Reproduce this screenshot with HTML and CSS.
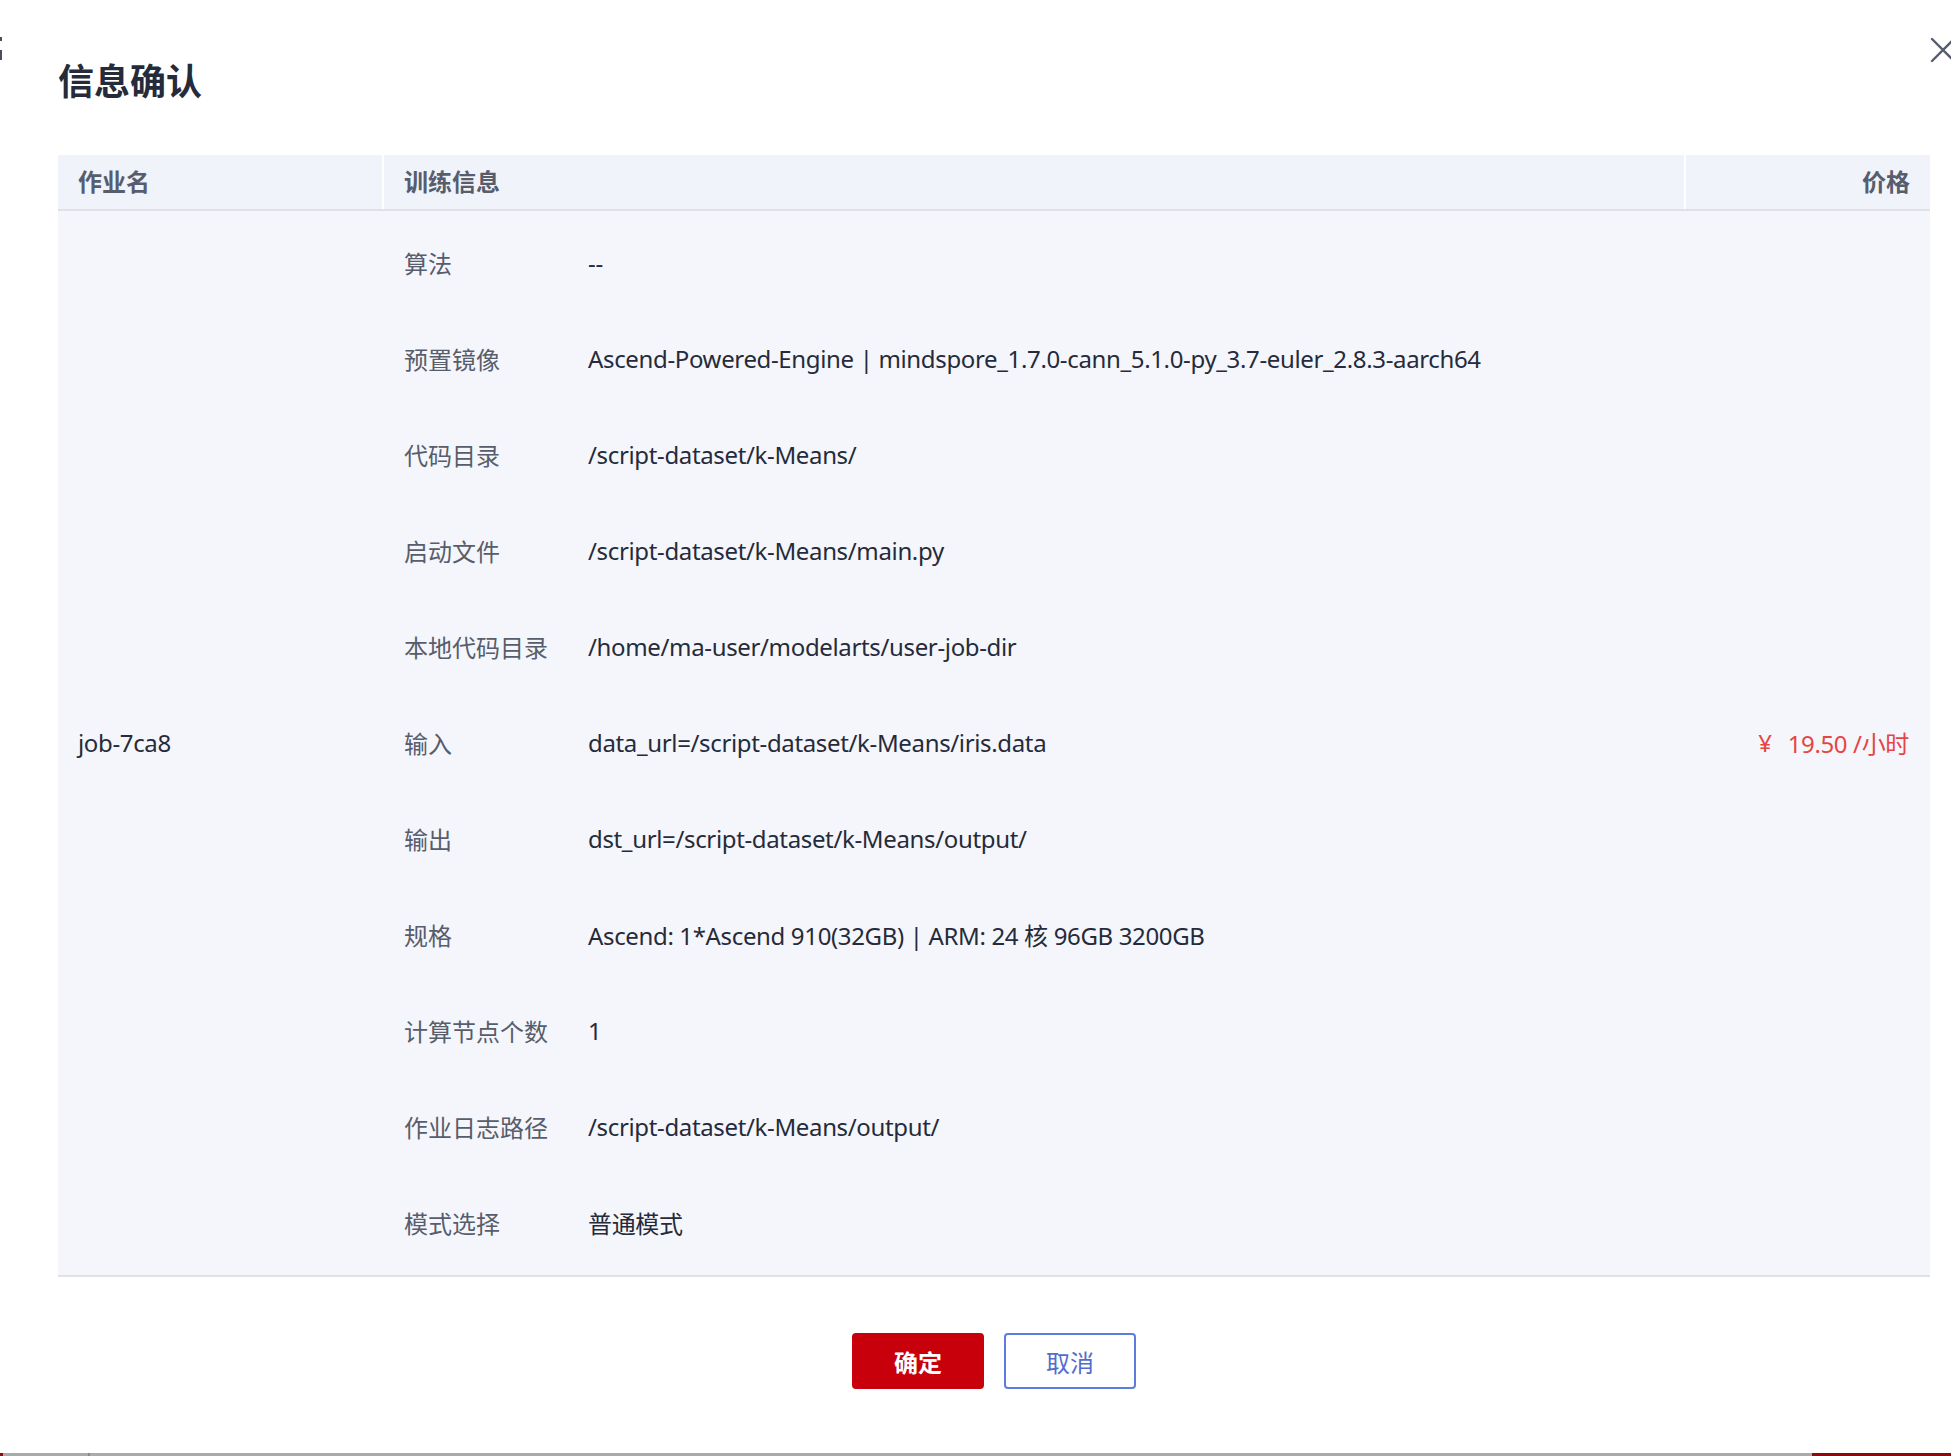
FILE: index.html
```html
<!DOCTYPE html>
<html lang="zh-CN">
<head>
<meta charset="utf-8">
<title>信息确认</title>
<link rel="stylesheet" href="styles.css">
</head>
<body>
<div class="edge-mark"><span></span><span></span></div>
<div class="dialog">
  <button class="close" aria-label="关闭">
    <svg width="26" height="26" viewBox="0 0 26 26"><path d="M2 2 L24 24 M24 2 L2 24" stroke="#575d6c" stroke-width="2.4" fill="none" stroke-linecap="round"/></svg>
  </button>
  <h1 class="title">信息确认</h1>
  <div class="table">
    <div class="thead">
      <div class="th">作业名</div>
      <div class="th">训练信息</div>
      <div class="th th-right">价格</div>
    </div>
    <div class="tbody">
      <div class="td td-name">job-7ca8</div>
      <div class="td td-info">
        <div class="row"><span class="label">算法</span><span class="value">--</span></div>
        <div class="row"><span class="label">预置镜像</span><span class="value">Ascend-Powered-Engine | mindspore_1.7.0-cann_5.1.0-py_3.7-euler_2.8.3-aarch64</span></div>
        <div class="row"><span class="label">代码目录</span><span class="value">/script-dataset/k-Means/</span></div>
        <div class="row"><span class="label">启动文件</span><span class="value">/script-dataset/k-Means/main.py</span></div>
        <div class="row"><span class="label">本地代码目录</span><span class="value">/home/ma-user/modelarts/user-job-dir</span></div>
        <div class="row"><span class="label">输入</span><span class="value">data_url=/script-dataset/k-Means/iris.data</span></div>
        <div class="row"><span class="label">输出</span><span class="value">dst_url=/script-dataset/k-Means/output/</span></div>
        <div class="row"><span class="label">规格</span><span class="value">Ascend: 1*Ascend 910(32GB) | ARM: 24 核 96GB 3200GB</span></div>
        <div class="row"><span class="label">计算节点个数</span><span class="value">1</span></div>
        <div class="row"><span class="label">作业日志路径</span><span class="value">/script-dataset/k-Means/output/</span></div>
        <div class="row"><span class="label">模式选择</span><span class="value">普通模式</span></div>
      </div>
      <div class="td td-price"><span class="yen">¥</span>19.50 /小时</div>
    </div>
  </div>
  <div class="actions">
    <button class="btn btn-primary">确定</button>
    <button class="btn btn-default">取消</button>
  </div>
</div>
<div class="taskbar"><span class="tb-red-left"></span><span class="tb-gray-a"></span><span class="tb-tick"></span><span class="tb-gray-b"></span><span class="tb-red-right"></span></div>
</body>
</html>
```

FILE: styles.css
```css
* { box-sizing: border-box; }
html, body { margin: 0; padding: 0; }
body {
  width: 1951px;
  height: 1456px;
  overflow: hidden;
  background: #ffffff;
  font-family: "Noto Sans", "Noto Sans CJK SC", sans-serif;
  color: #252b3a;
  display: flex;
  flex-direction: column;
  position: relative;
}
.edge-mark {
  position: absolute;
  left: 0;
  top: 37px;
  width: 3px;
  display: flex;
  flex-direction: column;
  gap: 9px;
}
.edge-mark span { display: block; width: 2px; height: 4px; background: #4a4f5c; }
.edge-mark span + span { height: 10px; }
.dialog {
  position: relative;
  flex: 1;
  padding: 58px 21px 0 58px;
}
.close {
  position: absolute;
  top: 37px;
  left: 1930px;
  width: 26px;
  height: 26px;
  padding: 0;
  border: 0;
  background: transparent;
}
.close svg { display: block; }
.title {
  margin: 0;
  font-size: 36px;
  line-height: 48px;
  font-weight: 700;
  color: #252b3a;
}
.table { margin-top: 49px; }
.thead, .tbody {
  display: grid;
  grid-template-columns: 324px 1300px 244px;
  column-gap: 2px;
}
.thead {
  border-bottom: 2px solid #dfe1e6;
}
.th {
  background: #f0f3fa;
  height: 54px;
  line-height: 54px;
  padding: 0 20px;
  font-size: 24px;
  font-weight: 700;
  color: #575d6c;
}
.th-right { text-align: right; }
.tbody {
  background: #f5f6fb;
  border-bottom: 2px solid #dfe1e6;
  padding: 3px 0 5px;
}
.td {
  font-size: 24px;
  padding: 0 20px;
}
.td-name, .td-price {
  display: flex;
  align-items: center;
  letter-spacing: -0.35px;
}
.td-price {
  justify-content: flex-end;
  color: #e54545;
  padding-right: 21px;
}
.yen { margin-right: 16px; }
.row {
  display: flex;
  align-items: center;
  height: 96px;
}
.label {
  width: 184px;
  flex: none;
  color: #575d6c;
}
.value { color: #252b3a; white-space: nowrap; letter-spacing: -0.35px; }
.actions {
  display: flex;
  justify-content: center;
  gap: 20px;
  margin-top: 56px;
}
.btn {
  width: 132px;
  height: 56px;
  border-radius: 4px;
  font-family: "Noto Sans", "Noto Sans CJK SC", sans-serif;
  font-size: 24px;
  padding: 0;
}
.btn-primary {
  background: #c7000b;
  border: 2px solid #c7000b;
  color: #ffffff;
  font-weight: 600;
}
.btn-default {
  background: #ffffff;
  border: 2px solid #5e7ce0;
  color: #526ecc;
}
.taskbar {
  display: flex;
  height: 3px;
  flex: none;
}
.taskbar span { display: block; height: 3px; }
.tb-red-left { width: 3px; background: #8b0a0a; }
.tb-gray-a { width: 85px; background: #aaaaaa; }
.tb-tick { width: 2px; background: #8a8a8a; }
.tb-gray-b { flex: 1; background: #aaaaaa; }
.tb-red-right { width: 139px; background: #8b0a0a; }
```
